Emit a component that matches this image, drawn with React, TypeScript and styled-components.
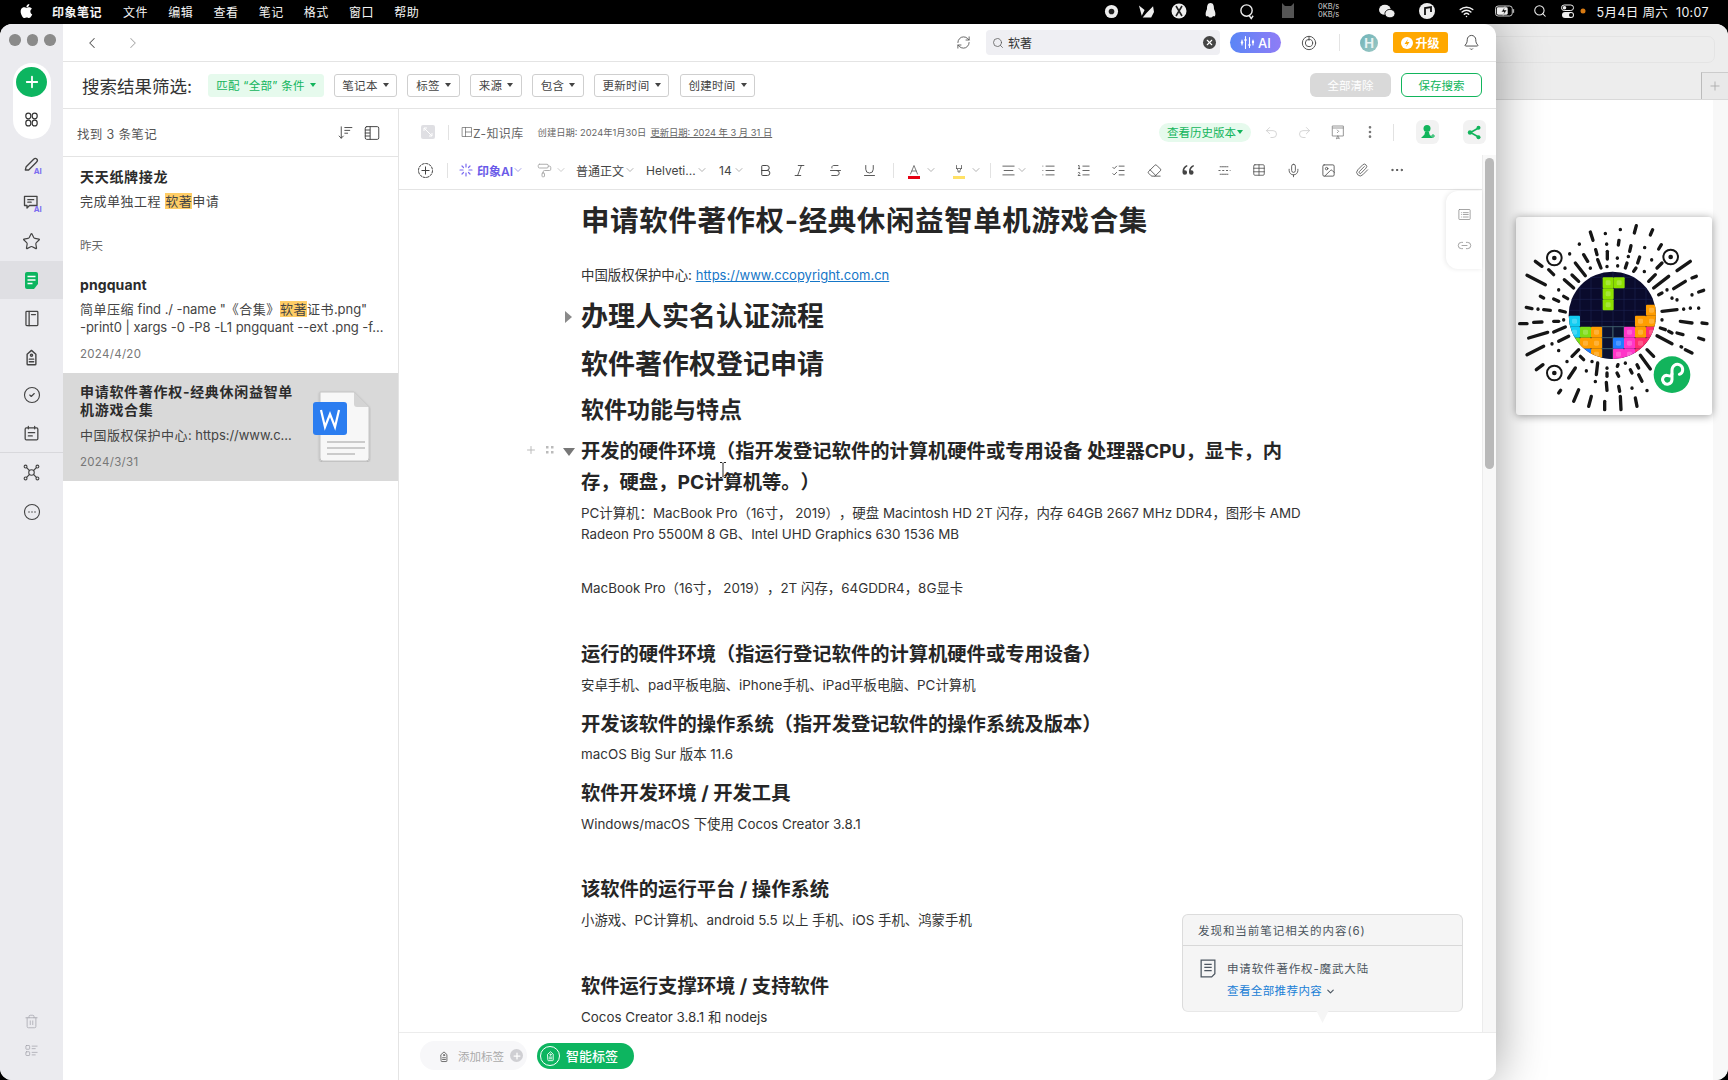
import React from "react";
import styled, { createGlobalStyle } from "styled-components";
import {
  ChevronLeft, ChevronRight, RefreshCw, Search, Bell, Undo2, Redo2, Star, ChevronDown, Plus,
  Bold, Italic, Strikethrough, Underline, List, ListOrdered, ListChecks, Eraser, Table, Mic,
  Image as ImageIcon, Paperclip, MoreHorizontal, PaintRoller, Link2, Trash2, MoreVertical, X,
  Wifi, CircleCheck,
} from "lucide-react";

const FONT = `"Inter", "Liberation Sans", "Noto Sans CJK SC", sans-serif`;

const Global = createGlobalStyle`
  html, body { margin: 0; padding: 0; background: #000; }
  body { font-family: ${FONT}; color: #333; text-spacing-trim: space-all; }
  * { box-sizing: border-box; }
`;

const Page = styled.div`
  width: 1728px; height: 1080px; display: flex; flex-direction: column; overflow: hidden; background: #000;
`;

/* ---------- menu bar ---------- */
const MenuBar = styled.div`
  height: 24px; flex: none; display: flex; align-items: center; color: #f4f4f4; position: relative;
  padding: 0 0 2px 19px; font-size: 12px; letter-spacing: .5px;
`;
const MenuItem = styled.span<{ $ml?: number; $bold?: boolean }>`
  margin-left: ${p => p.$ml ?? 20.2}px; font-weight: ${p => (p.$bold ? 700 : 400)}; white-space: nowrap;
`;
const StatusArea = styled.div`
  margin-left: auto; display: flex; align-items: center; height: 24px; padding-right: 19px;
`;
const StatusSlot = styled.span<{ $ml: number; $w?: number }>`
  margin-left: ${p => p.$ml}px; width: ${p => p.$w ?? 16}px; height: 16px; display: flex; align-items: center; justify-content: center; color: #f2f2f2;
`;
const Speed = styled.span`
  margin-left: 20px; width: 26px; font-size: 7.5px; line-height: 8px; color: #ccc; letter-spacing: 0; text-align: center;
`;
const Clock = styled.span`
  margin-left: 9px; font-size: 12.5px; letter-spacing: .35px; color: #f2f2f2; white-space: nowrap;
`;

/* ---------- desktop & windows ---------- */
const Desktop = styled.div`
  flex: 1; position: relative; overflow: hidden;
`;
const BackWindow = styled.div`
  position: absolute; top: 0; right: 0; bottom: 0; left: 1300px; background: #fff; border-radius: 12px;
  display: flex; flex-direction: column; overflow: hidden;
`;
const BackBar = styled.div`
  height: 76px; flex: none; background: #ededed; border-bottom: 1px solid #d9d9d9; position: relative;
`;
const BackAddress = styled.div`
  position: absolute; left: 0; right: 13px; top: 12px; height: 27px; border: 1px solid #e4e4e4; border-radius: 7px;
`;
const BackTab = styled.div`
  position: absolute; right: 0; bottom: 0; width: 27px; height: 27px; background: #e9e9e9;
  border-left: 1px solid #bbb; border-top: 1px solid #ccc; display: flex; align-items: center; justify-content: center; color: #aaa;
`;
const BackBody = styled.div`
  flex: 1; position: relative; border-right: 15px solid #f8f8f8;
`;
const QrCard = styled.div`
  position: absolute; left: 216px; top: 117px; width: 196px; height: 198px; background: #fff; border-radius: 3px;
  box-shadow: 0 1px 8px rgba(0,0,0,.4);
`;
const FrontWindow = styled.div`
  position: absolute; left: 0; top: 0; width: 1496px; height: 1056px; background: #fff; border-radius: 12px;
  box-shadow: 0 0 50px rgba(0,0,0,.38); display: flex; overflow: hidden;
`;

/* ---------- left rail ---------- */
const Rail = styled.aside`
  width: 63px; flex: none; background: #ebebef; display: flex; flex-direction: column; align-items: center; padding-bottom: 15px;
`;
const Lights = styled.div`
  display: flex; gap: 6px; height: 39px; flex: none; align-items: center; padding-bottom: 7px; width: 100%; padding-left: 9px;
`;
const Light = styled.span`
  width: 11.5px; height: 11.5px; border-radius: 50%; background: #8a8a8a;
`;
const CreatePill = styled.div`
  width: 38px; height: 76px; flex: none; background: #fff; border-radius: 19px; display: flex; flex-direction: column; align-items: center; padding-top: 4px; color: #333;
`;
const CreateBtn = styled.div`
  width: 31px; height: 30px; border-radius: 50%; background: #0db560; color: #fff; display: flex; align-items: center; justify-content: center; margin-bottom: 14px;
`;
const RailItem = styled.div<{ $active?: boolean; $h?: number }>`
  width: 100%; height: ${p => p.$h ?? 38.3}px; flex: none; display: flex; align-items: center; justify-content: center; color: #444;
  background: ${p => (p.$active ? "#dfdfe3" : "transparent")};
`;
const RailTop = styled.div`
  height: 7px; flex: none;
`;
const RailRule = styled.div`
  width: 100%; height: 1px; background: #d8d8dc; flex: none;
`;
const RailSpace = styled.div`
  flex: 1;
`;
const RailFoot = styled.div`
  height: 29px; flex: none; display: flex; align-items: center; justify-content: center; color: #a4a4ac;
`;

/* ---------- main column ---------- */
const Main = styled.div`
  flex: 1; min-width: 0; display: flex; flex-direction: column;
`;
const TopBar = styled.div`
  height: 38px; flex: none; border-bottom: 1px solid #e4e4e4; display: flex; align-items: center; position: relative;
`;
const NavBtn = styled.span<{ $ml: number; $c: string }>`
  margin-left: ${p => p.$ml}px; display: flex; color: ${p => p.$c};
`;
const TopRight = styled.div`
  margin-left: auto; display: flex; align-items: center; padding-right: 16px;
`;
const SearchBox = styled.div`
  width: 234px; height: 25px; margin-left: 15px; background: #efeff3; border-radius: 4px; display: flex; align-items: center; padding: 0 2px 0 6px;
  font-size: 12px; color: #333; gap: 4px;
`;
const ClearDot = styled.span`
  margin-left: auto; width: 13px; height: 13px; border-radius: 50%; background: #444; color: #fff; display: flex; align-items: center; justify-content: center; margin-right: 2px;
`;
const AiBtn = styled.div`
  margin-left: 10px; width: 51px; height: 21px; border-radius: 11px; background: linear-gradient(90deg, #5a86f6, #8f7cf6); color: #fff; display: flex; align-items: center; justify-content: center; gap: 3px; font-size: 13px; font-weight: 500;
`;
const TopDivider = styled.span`
  width: 1px; height: 17px; background: #e4e4e4; margin-left: 22px;
`;
const Avatar = styled.span`
  width: 18px; height: 18px; border-radius: 50%; background: linear-gradient(135deg, #6fb3b8, #9cc8c4); margin-left: 20px; color: #e8f3f3; font-size: 13px; display: flex; align-items: center; justify-content: center; font-weight: 700;
`;
const Upgrade = styled.div`
  margin-left: 15px; width: 55px; height: 21px; background: #ffa800; color: #fff; border-radius: 3px; display: flex; align-items: center; justify-content: center; gap: 2px; font-size: 12px; font-weight: 700;
`;
const IconSlot = styled.span<{ $ml: number; $c?: string }>`
  margin-left: ${p => p.$ml}px; display: flex; color: ${p => p.$c ?? "#555"};
`;

const FilterBar = styled.div`
  height: 47px; flex: none; border-bottom: 1px solid #e4e4e4; display: flex; align-items: center; padding: 0 14px 0 19px;
`;
const FilterLabel = styled.span`
  font-size: 17.5px; color: #333; white-space: nowrap; width: 126px;
`;
const Chip = styled.span<{ $w: number; $green?: boolean; $ml?: number }>`
  width: ${p => p.$w}px; height: 23px; margin-left: ${p => p.$ml ?? 10}px; border-radius: 3px; font-size: 11.5px; letter-spacing: .3px; display: flex; align-items: center; justify-content: center; gap: 5px; white-space: nowrap;
  color: ${p => (p.$green ? "#12b55c" : "#444")};
  background: ${p => (p.$green ? "#e6faed" : "#fff")};
  border: 1px solid ${p => (p.$green ? "#e6faed" : "#cfcfcf")};
`;
const Caret = styled.i`
  width: 0; height: 0; border-left: 3px solid transparent; border-right: 3px solid transparent; border-top: 4px solid currentColor; display: block;
`;
const FilterRight = styled.div`
  margin-left: auto; display: flex; gap: 10px;
`;
const ClearBtn = styled.span`
  width: 81px; height: 24px; background: #d9d9d9; color: #fff; border-radius: 6px; font-size: 11.5px; display: flex; align-items: center; justify-content: center;
`;
const SaveBtn = styled.span`
  width: 81px; height: 24px; border: 1px solid #12b55c; color: #12b55c; border-radius: 6px; font-size: 11.5px; display: flex; align-items: center; justify-content: center;
`;

const Body = styled.div`
  flex: 1; min-height: 0; display: flex;
`;

/* ---------- note list ---------- */
const ListPane = styled.section`
  width: 336px; flex: none; border-right: 1px solid #e4e4e4; display: flex; flex-direction: column;
`;
const ListHead = styled.div`
  height: 48px; flex: none; border-bottom: 1px solid #e4e4e4; display: flex; align-items: center; padding: 2px 17px 0 14px; font-size: 12.5px; color: #555; letter-spacing: .35px;
`;
const ListHeadIcons = styled.div`
  margin-left: auto; display: flex; gap: 9px; color: #444; margin-top: -2px;
`;
const NoteItem = styled.div<{ $h: number; $sel?: boolean }>`
  height: ${p => p.$h}px; flex: none; padding: 0 14px 0 17px; background: ${p => (p.$sel ? "#d9d9d9" : "transparent")};
  display: flex; flex-direction: column; position: relative;
`;
const NoteTitle = styled.div<{ $mt: number; $w?: number; $ls?: number }>`
  margin-top: ${p => p.$mt}px; font-size: 14px; line-height: 18px; font-weight: 700; color: #2b2b2b; letter-spacing: ${p => p.$ls ?? 0.7}px; ${p => (p.$w ? `width: ${p.$w}px;` : "")}
`;
const Snippet = styled.div<{ $mt: number }>`
  margin-top: ${p => p.$mt}px; font-size: 13px; line-height: 17px; color: #444; white-space: nowrap; letter-spacing: -.05px;
`;
const Cjk = styled.span`
  letter-spacing: .5px;
`;
const Mark = styled.mark`
  background: #ffcd66; color: #444; letter-spacing: .5px;
`;
const NoteDate = styled.div<{ $mt: number }>`
  margin-top: ${p => p.$mt}px; font-size: 11.5px; line-height: 16px; color: #777; letter-spacing: .3px;
`;
const DayLabel = styled.div`
  height: 18px; flex: none; margin: -1px 0 1px 17px; font-size: 11.5px; line-height: 18px; color: #666;
`;
const DocThumb = styled.span`
  position: absolute; left: 248px; top: 17px; display: block; width: 60px; height: 72px;
`;

/* ---------- editor ---------- */
const EditorPane = styled.section`
  flex: 1; min-width: 0; display: flex; flex-direction: column; position: relative;
`;
const EditorHead = styled.div`
  height: 46px; flex: none; display: flex; align-items: center; padding-left: 22px; color: #777;
`;
const Expand = styled.span`
  width: 14px; height: 14px; background: #dfdfe3; border-radius: 2px; display: flex; align-items: center; justify-content: center; color: #fff;
`;
const VRule = styled.span<{ $ml: number; $h?: number }>`
  width: 1px; height: ${p => p.$h ?? 15}px; margin-left: ${p => p.$ml}px; background: #e2e2e2; flex: none;
`;
const NotebookName = styled.span`
  margin-left: 12px; font-size: 12px; color: #666; white-space: nowrap; display: flex; align-items: center; letter-spacing: .4px;
`;
const Dates = styled.span`
  margin-left: 14px; font-size: 9.3px; color: #666; white-space: nowrap;
`;
const Updated = styled.span`
  margin-left: 4px; text-decoration: underline;
`;
const HistoryPill = styled.span`
  margin-left: auto; width: 92px; height: 19px; border-radius: 10px; background: #e6faed; color: #12b55c; font-size: 11.5px; display: flex; align-items: center; justify-content: center; gap: 1px; white-space: nowrap;
`;
const HeadTool = styled.span<{ $ml: number; $c?: string }>`
  margin-left: ${p => p.$ml}px; display: flex; color: ${p => p.$c ?? "#999"};
`;
const SoftBox = styled.span<{ $ml: number; $mr?: number }>`
  margin-left: ${p => p.$ml}px; margin-right: ${p => p.$mr ?? 0}px; width: 23px; height: 24px; border-radius: 6px; background: #f2f2f2; color: #12b55c; display: flex; align-items: center; justify-content: center;
`;
const Toolbar = styled.div`
  height: 35px; flex: none; border-bottom: 1px solid #e4e4e4; display: flex; align-items: center; padding: 0 0 4px 16px; color: #444;
`;
const Tool = styled.span<{ $ml?: number; $w?: number; $c?: string }>`
  margin-left: ${p => p.$ml ?? 0}px; ${p => (p.$w ? `width: ${p.$w}px;` : "")} display: flex; align-items: center; justify-content: center; flex: none; color: ${p => p.$c ?? "inherit"}; position: relative;
`;
const ToolText = styled.span<{ $ml: number; $w: number; $c?: string; $bold?: boolean }>`
  margin-left: ${p => p.$ml}px; width: ${p => p.$w}px; font-size: 12px; white-space: nowrap; flex: none; color: ${p => p.$c ?? "#444"}; font-weight: ${p => (p.$bold ? 600 : 400)};
`;
const ColorBar = styled.i<{ $c: string }>`
  position: absolute; left: 0; right: 0; bottom: -2px; height: 3px; background: ${p => p.$c};
`;
const Chev = ({ ml = 0, c = "#999" }: { ml?: number; c?: string }) => (
  <Tool $ml={ml} $w={12} $c={c}><ChevronDown size={12} strokeWidth={1.5} /></Tool>
);

const Scroller = styled.div`
  flex: 1; min-height: 0; overflow: hidden; padding: 11px 0 0 182px; position: relative;
`;
const Title = styled.h1`
  margin: 0; font-size: 28.5px; line-height: 40px; font-weight: 700; color: #262626; white-space: nowrap; letter-spacing: .6px;
`;
const H2 = styled.h2<{ $mt: number }>`
  margin: ${p => p.$mt}px 0 0; font-size: 27px; line-height: 38px; font-weight: 700; color: #262626; white-space: nowrap; position: relative;
`;
const H3 = styled.h3<{ $mt: number }>`
  margin: ${p => p.$mt}px 0 0; font-size: 23px; line-height: 32px; font-weight: 700; color: #262626; white-space: nowrap;
`;
const H4 = styled.h4<{ $mt: number }>`
  margin: ${p => p.$mt}px 0 0; font-size: 19.3px; line-height: 31px; font-weight: 700; color: #262626; white-space: nowrap; position: relative;
`;
const P = styled.p<{ $mt: number }>`
  margin: ${p => p.$mt}px 0 0; font-size: 13.4px; line-height: 21px; color: #333; white-space: nowrap;
`;
const Link = styled.a`
  color: #1576c7; text-decoration: underline; font-size: 13px;
`;
const Fold = styled.i<{ $dir: "right" | "down"; $top: number }>`
  position: absolute; left: -16px; top: ${p => p.$top}px; width: 0; height: 0; display: block;
  ${p => p.$dir === "right"
    ? "border-top: 6px solid transparent; border-bottom: 6px solid transparent; border-left: 7px solid #8a8a8a;"
    : "left: -18px; border-left: 6px solid transparent; border-right: 6px solid transparent; border-top: 8px solid #777;"}
`;
const Gutter = styled.span`
  position: absolute; left: -56px; top: 8px; display: flex; align-items: center; gap: 9px; color: #bbb;
`;
const Cursor = styled.span`
  position: absolute; left: 138px; top: 26px; display: flex; color: #222;
`;
const ScrollTrack = styled.div`
  position: absolute; right: 0; top: 46px; bottom: 48px; width: 14px; background: #f8f8f8; border-left: 1px solid #ececec;
`;
const ScrollThumb = styled.div`
  margin: 3px 0 0 2px; width: 9px; height: 311px; background: #b9b9b9; border-radius: 5px;
`;
const SidePanel = styled.div`
  position: absolute; right: 14px; top: 82px; width: 36px; height: 78px; background: #fff; border-radius: 12px 0 0 12px;
  box-shadow: -1px 0 5px rgba(0,0,0,.09); display: flex; flex-direction: column; align-items: center; justify-content: center; gap: 16px; color: #888;
`;
const RecPanel = styled.div`
  position: absolute; left: 783px; top: 805px; width: 281px; height: 98px; background: #f5f5f5; border: 1px solid #dcdcdc; border-bottom-color: #e8e8e8; border-radius: 6px;
`;
const RecHead = styled.div`
  height: 31px; border-bottom: 1px solid #d8d8d8; padding-left: 15px; font-size: 11.5px; line-height: 32px; color: #4c5660; letter-spacing: .95px;
`;
const RecRow = styled.div`
  display: flex; align-items: center; height: 24px; margin-top: 10px; padding-left: 17px; gap: 11px; font-size: 11.5px; color: #4c5660; letter-spacing: .85px;
`;
const RecLink = styled.div`
  padding-left: 44px; line-height: 22px; font-size: 11.5px; color: #1a80d6; letter-spacing: .4px; display: flex; align-items: center; gap: 3px;
`;
const RecTip = styled.i`
  position: absolute; left: 132px; bottom: -12px; width: 15px; height: 15px; background: #f5f5f5; clip-path: polygon(0 0, 100% 0, 50% 100%); display: block;
`;
const Footer = styled.div`
  height: 48px; flex: none; border-top: 1px solid #ececec; background: #fff; display: flex; align-items: center; padding: 0 0 2px 21px; position: relative;
`;
const AddTag = styled.div`
  width: 107px; height: 29px; border-radius: 15px; background: #f7f7f9; display: flex; align-items: center; padding-left: 17px; font-size: 11.5px; color: #aaa; gap: 7px;
`;
const TagGlyph = styled.span`
  display: flex; color: #666;
`;
const TagPlus = styled.span`
  width: 13px; height: 13px; border-radius: 50%; background: #cfcfd3; color: #fff; display: flex; align-items: center; justify-content: center; margin-left: -1px;
`;
const SmartTag = styled.div`
  margin-left: 10px; width: 97px; height: 26px; border-radius: 13px; background: #0db560; color: #fff; display: flex; align-items: center; padding-left: 3px; gap: 6px; font-size: 13px; font-weight: 500;
`;
const SmartIcon = styled.span`
  width: 20px; height: 20px; border-radius: 50%; border: 1px solid #fff; display: flex; align-items: center; justify-content: center;
`;

/* ---------- drawings ---------- */
const Svg = ({ s = 18, vb = "0 0 24 24", sw = 1.6, children }: { s?: number; vb?: string; sw?: number; children: React.ReactNode }) => (
  <svg width={s} height={s} viewBox={vb} fill="none" stroke="currentColor" strokeWidth={sw} strokeLinecap="round" strokeLinejoin="round">{children}</svg>
);
const AiMark = () => <text x="14" y="23" fontSize="9.5" fontWeight="700" fill="#7b6cf0" stroke="none" fontFamily="Inter, sans-serif">AI</text>;
const TagIcon = ({ s = 18 }: { s?: number }) => (
  <Svg s={s}><path d="M7 9.5 12 5l5 4.5V20.5a1 1 0 0 1-1 1H8a1 1 0 0 1-1-1z" /><circle cx="12" cy="10.5" r="1.2" /><path d="M9.5 15h5M9.5 18h5" /></Svg>
);
const Sparkle = ({ s = 14, c = "#7b6cf0" }: { s?: number; c?: string }) => (
  <svg width={s} height={s} viewBox="0 0 14 14" stroke={c} strokeWidth="1.2" strokeLinecap="round" fill="none">
    <path d="M7 1v3M7 10v3M1 7h3M10 7h3M3 3l1.5 1.5M9.5 9.5 11 11M11 3 9.5 4.5M4.5 9.5 3 11" />
  </svg>
);
const AiBars = () => (
  <svg width="15" height="15" viewBox="0 0 15 15" stroke="#fff" strokeWidth="1.1" strokeLinecap="round" fill="#fff">
    <path d="M2 5v5M5.500 1.500v12M9.500 2.500v10M13 5v5" />
    <circle cx="2" cy="7.500" r="1.200" stroke="none" /><circle cx="5.500" cy="5" r="1.200" stroke="none" /><circle cx="9.500" cy="10" r="1.200" stroke="none" /><circle cx="13" cy="7" r="1.200" stroke="none" />
  </svg>
);
const ShareDots = () => (
  <svg width="15" height="15" viewBox="0 0 15 15" stroke="#12b55c" strokeWidth="1.6" fill="#12b55c">
    <path d="M11.500 3 3.500 7.500l8 4.500" fill="none" />
    <circle cx="11.500" cy="2.800" r="2" stroke="none" /><circle cx="3" cy="7.500" r="2.200" stroke="none" /><circle cx="11.500" cy="12.200" r="2" stroke="none" />
  </svg>
);
const Apple = () => (
  <svg width="14" height="16" viewBox="0 0 14 17" fill="#fff"><path d="M11.6 9c0-1.9 1.6-2.8 1.7-2.9-.9-1.3-2.3-1.5-2.8-1.5-1.2-.1-2.3.7-2.9.7s-1.5-.7-2.5-.7C3.8 4.6 2.6 5.3 1.9 6.5c-1.3 2.3-.3 5.7 1 7.5.6.9 1.4 1.9 2.4 1.9s1.3-.6 2.5-.6 1.5.6 2.5.6 1.7-.9 2.3-1.8c.7-1 1-2 1-2.1-.1 0-2-.8-2-3zM9.7 3.4c.5-.6.9-1.5.8-2.4-.8 0-1.7.5-2.3 1.2-.5.6-.9 1.5-.8 2.3.9.1 1.8-.4 2.3-1.1z" /></svg>
);

const dashes: number[][] = [
  [300,97,308,122],[345,101,345,102],[390,89,390,90],[438,78,432,100],[487,90,480,106],[513,135,505,148],[267,133,267,134],[349,133,349,134],[386,122,384,136],[422,138,418,155],[463,143,463,144],[238,162,238,163],[316,150,320,165],[351,155,351,178],[381,175,381,176],[414,170,414,171],[448,172,442,190],[484,180,484,181],[500,205,515,190],[600,185,560,213],
  [135,185,155,200],[175,210,190,225],[224,205,224,206],[255,190,285,228],[280,165,292,185],[300,205,300,206],[322,180,332,205],[350,200,350,201],[382,198,382,199],[410,190,405,205],[437,205,430,215],[462,215,462,216],[475,245,495,225],[490,265,535,230],[550,267,585,245],[618,230,605,235],
  [110,227,165,255],[222,240,250,265],[245,226,265,245],[530,270,530,271],[505,285,515,280],[205,270,205,271],[190,298,205,305],[150,290,160,295],[625,277,640,272],[605,285,605,286],[560,300,560,301],[545,295,545,296],[220,290,232,297],[108,323,125,327],[143,328,143,329],[160,330,180,332],[208,333,225,337],[515,335,560,330],[580,328,580,329],[600,325,600,326],[625,325,625,326],
  [220,360,220,361],[88,372,110,372],[130,368,155,367],[190,365,205,365],[515,360,515,361],[570,365,605,370],[635,370,650,372],[190,397,225,382],[115,415,172,398],[205,425,235,410],[510,385,525,390],[535,395,545,400],[560,400,578,405],[625,415,640,420],[110,465,160,440],[185,432,185,433],[500,408,545,432],[572,441,574,442],[585,450,605,460],[205,452,205,453],[245,470,265,450],[138,510,158,495],[230,485,230,486],[270,470,280,480],[470,450,490,470],[450,467,480,508],[235,535,255,505],[305,485,305,486],[322,490,318,525],[288,513,288,514],[350,505,350,506],[383,495,381,500],[405,490,405,491],[440,495,445,505],[350,520,350,530],[380,520,385,530],[420,510,425,520],[445,525,455,545],[315,545,315,546],[348,548,350,572],[385,560,388,575],[425,565,425,566],[470,572,470,573],[211,572,205,580],[265,570,250,605],[303,590,295,620],[343,605,343,630],[390,590,392,630],[435,595,440,620],
];
const blocks: [number, number, string][] = [
  [337,233,"#8de000"],[370,233,"#8de000"],[337,266,"#8de000"],[337,299,"#8de000"],
  [467,315,"#ff9d00"],[434,348,"#ff9d00"],[467,348,"#ff9d00"],[434,381,"#ff9d00"],[467,381,"#ff2d6f"],
  [236,348,"#12cdf2"],[236,381,"#12cdf2"],[269,381,"#7ddc14"],[302,381,"#ff9d00"],
  [401,381,"#ff35c8"],[269,414,"#ff9d00"],[302,414,"#ff9d00"],[368,414,"#1f7dff"],[401,414,"#ff35c8"],[434,414,"#ff2d6f"],[467,414,"#ff2d6f"],
  [269,447,"#1f7dff"],[302,447,"#ff9d00"],[368,447,"#ff35c8"],[401,447,"#ff35c8"],[434,447,"#ff2d6f"],[236,414,"#7ddc14"],
];
const darks: [number, number][] = [[335,381],[368,381],[335,414],[335,447]];
const QrCode = () => (
  <svg width="196" height="198" viewBox="77 52 588 594">
    <defs><clipPath id="qrc"><circle cx="366" cy="347" r="131" /></clipPath></defs>
    <g stroke="#161616" strokeLinecap="round" strokeWidth="10" fill="none">
      {dashes.map((d, i) => <line key={i} x1={d[0]} y1={d[1]} x2={d[2]} y2={d[3]} />)}
    </g>
    {[[192,175],[541,172],[192,520]].map(([x, y]) => (
      <g key={x + "-" + y} fill="none" stroke="#161616">
        <circle cx={x} cy={y} r="22" strokeWidth="6" />
        <circle cx={x} cy={y} r="7" fill="#161616" strokeWidth="0" />
      </g>
    ))}
    <g clipPath="url(#qrc)">
      <rect x="230" y="210" width="275" height="275" fill="#0a0b2c" />
      {[269,302,335,368,401,434,467].map(x => <line key={x} x1={x} y1="210" x2={x} y2="480" stroke="#1c2350" strokeWidth="2" />)}
      {[233,266,299,332,365].map(y => <line key={y} x1="230" y1={y} x2="505" y2={y} stroke="#1c2350" strokeWidth="2" />)}
      {darks.map(([x, y]) => <rect key={x + "d" + y} x={x} y={y} width="33" height="33" fill="#0c1230" stroke="#3c5a68" strokeWidth="3" />)}
      {blocks.map(([x, y, c]) => (
        <g key={x + "b" + y}>
          <rect x={x} y={y} width="33" height="33" rx="3" fill={c} />
          <rect x={x + 9} y={y + 9} width="15" height="15" rx="4" fill="#fff" opacity=".22" />
        </g>
      ))}
    </g>
    <circle cx="545" cy="525" r="55" fill="#12b45c" />
    <path d="M520 548c-8-10 0-24 13-20 10 3 12-1 12-8v-8c0-14 12-22 24-16 12 7 10 24-2 28" fill="none" stroke="#fff" strokeWidth="9" strokeLinecap="round" />
    <path d="M520 548c6 9 24 7 25-8v-18" fill="none" stroke="#fff" strokeWidth="9" strokeLinecap="round" />
  </svg>
);

const WordDoc = () => (
  <svg width="60" height="72" viewBox="0 0 60 72">
    <defs><filter id="ds" x="-20%" y="-20%" width="140%" height="140%"><feDropShadow dx="0" dy="1" stdDeviation="1" floodOpacity=".25" /></filter></defs>
    <path d="M9 2h34l15 15v51a3 3 0 0 1-3 3H12a3 3 0 0 1-3-3z" fill="#f7f7f7" stroke="#c4c4c4" filter="url(#ds)" />
    <path d="M43 2v12a3 3 0 0 0 3 3h12z" fill="#d4d4d4" />
    <rect x="2" y="12" width="34" height="33" rx="3" fill="#2b7df0" />
    <path d="M10 20l4 17 5-13 5 13 4-17" fill="none" stroke="#fff" strokeWidth="2.2" />
    <path d="M16 52h38M16 58h38M16 64h28" stroke="#bdbdbd" strokeWidth="1.6" />
  </svg>
);

export default function App() {
  return (
    <Page>
      <Global />
      <MenuBar>
        <Apple />
        <MenuItem $ml={19} $bold>印象笔记</MenuItem>
        <MenuItem $ml={21}>文件</MenuItem>
        <MenuItem>编辑</MenuItem>
        <MenuItem>查看</MenuItem>
        <MenuItem>笔记</MenuItem>
        <MenuItem>格式</MenuItem>
        <MenuItem>窗口</MenuItem>
        <MenuItem>帮助</MenuItem>
        <StatusArea>
          <StatusSlot $ml={0}><svg width="15" height="15" viewBox="0 0 16 16"><circle cx="8" cy="8" r="7" fill="#eee" /><circle cx="8" cy="8" r="3" fill="#222" /></svg></StatusSlot>
          <StatusSlot $ml={18}><svg width="17" height="15" viewBox="0 0 17 15" fill="#eee"><path d="M1 1l6 5-3 6zM16 2l-7 7-4 5h9l3-6z" /></svg></StatusSlot>
          <StatusSlot $ml={17}><svg width="16" height="16" viewBox="0 0 16 16"><circle cx="8" cy="8" r="7.5" fill="#eee" /><path d="M5 3l6 10M11 3 5 13" stroke="#222" strokeWidth="1.6" /></svg></StatusSlot>
          <StatusSlot $ml={16}><svg width="13" height="16" viewBox="0 0 13 16" fill="#eee"><path d="M6.5 0C3.5 0 3 3 3 6c-1 2-2 5-1 7 1 1 2 0 2 0 1 2 4 2 5 0 0 0 1 1 2 0 1-2 0-5-1-7 0-3-.5-6-3.5-6z" /></svg></StatusSlot>
          <StatusSlot $ml={20}><svg width="17" height="17" viewBox="0 0 17 17" fill="none" stroke="#eee" strokeWidth="1.5"><circle cx="8" cy="7.5" r="6" /><path d="M11 13l2 3 2-3" /></svg></StatusSlot>
          <StatusSlot $ml={25}><svg width="14" height="16" viewBox="0 0 14 16" fill="#555"><path d="M1 0l3 3h6l3-3v15H1z" /></svg></StatusSlot>
          <Speed>0KB/s<br />0KB/s</Speed>
          <StatusSlot $ml={37}><svg width="19" height="17" viewBox="0 0 19 17" fill="#eee"><ellipse cx="7" cy="6.5" rx="7" ry="6" /><ellipse cx="13" cy="11" rx="6" ry="5" stroke="#000" /></svg></StatusSlot>
          <StatusSlot $ml={24}><svg width="16" height="16" viewBox="0 0 16 16"><circle cx="8" cy="8" r="8" fill="#eee" /><path d="M6 12V5l6-1v5" stroke="#111" strokeWidth="1.8" fill="none" /></svg></StatusSlot>
          <StatusSlot $ml={24}><Wifi size={15} strokeWidth={2.4} /></StatusSlot>
          <StatusSlot $ml={20} $w={20}><svg width="22" height="12" viewBox="0 0 22 12" fill="none"><rect x=".5" y=".5" width="18.5" height="11" rx="3" stroke="#ddd" /><rect x="2" y="2" width="12" height="8" rx="1.5" fill="#eee" /><path d="M20.5 4v4" stroke="#ddd" /><path d="M11 1 7 7h3l-1 4 4-6h-3z" fill="#000" stroke="#eee" strokeWidth=".6" /></svg></StatusSlot>
          <StatusSlot $ml={17}><Search size={14} strokeWidth={1.8} /></StatusSlot>
          <StatusSlot $ml={12}><svg width="14" height="15" viewBox="0 0 14 15" fill="none"><rect x=".5" y="1" width="12" height="5.5" rx="2.7" stroke="#eee" /><rect x="1" y="8" width="12" height="6" rx="3" fill="#eee" /><circle cx="10" cy="11" r="2" fill="#000" /><circle cx="3.5" cy="3.7" r="1.8" fill="#eee" /></svg></StatusSlot>
          <StatusSlot $ml={2} $w={10}><svg width="6" height="6"><circle cx="3" cy="3" r="2.5" fill="#d87a12" /></svg></StatusSlot>
          <Clock>5月4日 周六&nbsp; 10:07</Clock>
        </StatusArea>
      </MenuBar>
      <Desktop>
        <BackWindow>
          <BackBar>
            <BackAddress />
            <BackTab><Plus size={14} strokeWidth={1.5} /></BackTab>
          </BackBar>
          <BackBody>
            <QrCard><QrCode /></QrCard>
          </BackBody>
        </BackWindow>
        <FrontWindow>
          <Rail>
            <Lights><Light /><Light /><Light /></Lights>
            <CreatePill>
              <CreateBtn><Plus size={18} strokeWidth={2.4} /></CreateBtn>
              <Svg s={17} sw={1.7}><rect x="4" y="3" width="7" height="8" rx="3.5" /><rect x="13" y="3" width="7" height="8" rx="3.5" /><rect x="4" y="13" width="7" height="8" rx="3.5" /><rect x="13" y="13" width="7" height="8" rx="3.5" /></Svg>
            </CreatePill>
            <RailTop />
            <RailItem><Svg s={20}><path d="M4 18l1-4L14 5c1-1 3-1 4 0s0 3-1 4l-9 9z" /><AiMark /></Svg></RailItem>
            <RailItem><Svg s={20}><path d="M3 4h15v11H9l-3 3v-3H3z" /><path d="M7 8h7M7 11h4" /><AiMark /></Svg></RailItem>
            <RailItem><Star size={19} strokeWidth={1.5} /></RailItem>
            <RailItem $active><svg width="13" height="17" viewBox="0 0 13 17"><path d="M2 0h9a2 2 0 0 1 2 2v10l-4 5H2a2 2 0 0 1-2-2V2a2 2 0 0 1 2-2z" fill="#0db560" /><path d="M2.500 4.500h8M2.500 8h8M2.500 11.500h5" stroke="#fff" strokeWidth="1.300" /></svg></RailItem>
            <RailItem><Svg s={19}><rect x="5" y="3" width="15" height="18" rx="1" /><path d="M9 3v18M12 7h5" /></Svg></RailItem>
            <RailItem><TagIcon s={21} /></RailItem>
            <RailItem><CircleCheck size={18} strokeWidth={1.5} /></RailItem>
            <RailItem><Svg s={19}><rect x="4" y="5" width="16" height="15" rx="1.5" /><path d="M8 3v3M16 3v3M8 11h8M8 15h5" /></Svg></RailItem>
            <RailRule />
            <RailItem $h={39}><Svg s={19} sw={1.4}><circle cx="12" cy="12" r="3.5" /><circle cx="4.5" cy="4.5" r="1.8" /><circle cx="19.5" cy="4.5" r="1.8" /><circle cx="4.5" cy="19.5" r="1.8" /><circle cx="19.5" cy="19.5" r="1.8" /><path d="M6 6l3.5 3.5M18 6l-3.5 3.5M6 18l3.5-3.5M18 18l-3.5-3.5" /></Svg></RailItem>
            <RailItem $h={39}><Svg s={18} sw={1.5}><circle cx="12" cy="12" r="10" /><path d="M8 12h.01M12 12h.01M16 12h.01" strokeWidth="2" /></Svg></RailItem>
            <RailSpace />
            <RailFoot><Trash2 size={15} strokeWidth={1.2} /></RailFoot>
            <RailFoot><Svg s={15} sw={1.2}><rect x="3" y="4" width="6" height="6" rx="1" /><rect x="3" y="14" width="6" height="6" rx="1" /><path d="M13 5h8M13 9h5M13 15h8M13 19h5" /></Svg></RailFoot>
          </Rail>
          <Main>
            <TopBar>
              <NavBtn $ml={20} $c="#555"><ChevronLeft size={18} strokeWidth={1.4} /></NavBtn>
              <NavBtn $ml={23} $c="#aaa"><ChevronRight size={18} strokeWidth={1.4} /></NavBtn>
              <TopRight>
                <IconSlot $ml={0}><RefreshCw size={15} strokeWidth={1.4} /></IconSlot>
                <SearchBox>
                  <Search size={12} strokeWidth={1.5} color="#555" />软著
                  <ClearDot><X size={9} strokeWidth={3} /></ClearDot>
                </SearchBox>
                <AiBtn><AiBars />AI</AiBtn>
                <IconSlot $ml={20}><Svg s={16} sw={1.5}><circle cx="12" cy="12" r="10" /><circle cx="12" cy="12" r="5.5" /><path d="M12 2v6" /></Svg></IconSlot>
                <TopDivider />
                <Avatar>H</Avatar>
                <Upgrade><svg width="12" height="12" viewBox="0 0 12 12"><circle cx="6" cy="6" r="6" fill="#fff" /><path d="M7 2 3.5 7H6l-1 3 3.5-5H6z" fill="#ffa800" /></svg>升级</Upgrade>
                <IconSlot $ml={15} $c="#444"><Bell size={17} strokeWidth={1.3} /></IconSlot>
              </TopRight>
            </TopBar>
            <FilterBar>
              <FilterLabel>搜索结果筛选:</FilterLabel>
              <Chip $w={116} $green $ml={0}>匹配 “全部” 条件<Caret /></Chip>
              <Chip $w={63}>笔记本<Caret /></Chip>
              <Chip $w={53}>标签<Caret /></Chip>
              <Chip $w={52}>来源<Caret /></Chip>
              <Chip $w={52}>包含<Caret /></Chip>
              <Chip $w={75}>更新时间<Caret /></Chip>
              <Chip $w={75} $ml={11}>创建时间<Caret /></Chip>
              <FilterRight>
                <ClearBtn>全部清除</ClearBtn>
                <SaveBtn>保存搜索</SaveBtn>
              </FilterRight>
            </FilterBar>
            <Body>
              <ListPane>
                <ListHead>
                  找到 3 条笔记
                  <ListHeadIcons>
                    <Svg s={17} sw={1.3}><path d="M6 4v16M3 17l3 3 3-3M11 5h10M11 9h7M11 13h4" /></Svg>
                    <Svg s={18} sw={1.3}><rect x="3" y="3.5" width="18" height="17" rx="2" /><path d="M9.5 3.5v17M3 8h6M3 12h6M3 16h6" /></Svg>
                  </ListHeadIcons>
                </ListHead>
                <NoteItem $h={81}>
                  <NoteTitle $mt={11}>天天纸牌接龙</NoteTitle>
                  <Snippet $mt={7}><Cjk>完成单独工程 </Cjk><Mark>软著</Mark><Cjk>申请</Cjk></Snippet>
                </NoteItem>
                <DayLabel>昨天</DayLabel>
                <NoteItem $h={117}>
                  <NoteTitle $mt={20} $ls={0.1}>pngquant</NoteTitle>
                  <Snippet $mt={7}><Cjk>简单压缩</Cjk> find ./ -name "<Cjk>《合集》</Cjk><Mark>软著</Mark><Cjk>证书</Cjk>.png"</Snippet>
                  <Snippet $mt={1}>-print0 | xargs -0 -P8 -L1 pngquant --ext .png -f...</Snippet>
                  <NoteDate $mt={10}>2024/4/20</NoteDate>
                </NoteItem>
                <NoteItem $h={108} $sel>
                  <NoteTitle $mt={10} $w={224}>申请软件著作权-经典休闲益智单机游戏合集</NoteTitle>
                  <Snippet $mt={8}><Cjk>中国版权保护中心</Cjk>: https://www.c...</Snippet>
                  <NoteDate $mt={10}>2024/3/31</NoteDate>
                  <DocThumb><WordDoc /></DocThumb>
                </NoteItem>
              </ListPane>
              <EditorPane>
                <EditorHead>
                  <Expand><svg width="10" height="10" viewBox="0 0 10 10" stroke="#fff" strokeWidth="1" fill="none"><path d="M1 1l8 8M1 1h3M1 1v3M9 9H6M9 9V6" /></svg></Expand>
                  <VRule $ml={13} />
                  <NotebookName><Svg s={12} sw={1.4}><rect x="3" y="3" width="18" height="18" /><path d="M9 3v18M9 12h12" /></Svg>Z-知识库</NotebookName>
                  <Dates>创建日期: 2024年1月30日<Updated>更新日期: 2024 年 3 月 31 日</Updated></Dates>
                  <HistoryPill>查看历史版本<Caret /></HistoryPill>
                  <HeadTool $ml={13} $c="#ccc"><Undo2 size={15} strokeWidth={1.3} /></HeadTool>
                  <HeadTool $ml={18} $c="#ccc"><Redo2 size={15} strokeWidth={1.3} /></HeadTool>
                  <HeadTool $ml={18} $c="#888"><Svg s={16} sw={1.3}><path d="M4 3h16v15H4zM4 6h16M11 9l2 2-2 2M12 18l2 4-2-1-2 1z" /></Svg></HeadTool>
                  <HeadTool $ml={16} $c="#777"><MoreVertical size={16} strokeWidth={2} /></HeadTool>
                  <VRule $ml={15} $h={17} />
                  <SoftBox $ml={22}><svg width="14" height="16" viewBox="0 0 14 16" fill="#12b55c"><circle cx="6" cy="4.5" r="3.5" /><path d="M4 8h4l.5 2.5L12 14H0l3.5-3.5z" /><path d="M10 12h4M12 10v4" stroke="#12b55c" /></svg></SoftBox>
                  <SoftBox $ml={24} $mr={10}><ShareDots /></SoftBox>
                </EditorHead>
                <Toolbar>
                  <Tool $w={20}><svg width="17" height="17" viewBox="0 0 17 17" fill="none" stroke="#444"><circle cx="8.5" cy="8.5" r="7" strokeDasharray="3 .6" /><path d="M8.5 4.5v8M4.5 8.5h8" /></svg></Tool>
                  <VRule $ml={12} />
                  <Tool $ml={11} $w={14}><Sparkle /></Tool>
                  <ToolText $ml={4} $w={35} $c="#6a5ae8" $bold>印象AI</ToolText>
                  <Chev c="#8a82e0" />
                  <Tool $ml={12} $w={16} $c="#aaa"><PaintRoller size={15} strokeWidth={1.5} /></Tool>
                  <Chev ml={3} c="#bbb" />
                  <ToolText $ml={9} $w={48}>普通正文</ToolText>
                  <Chev />
                  <ToolText $ml={10} $w={50}>Helveti...</ToolText>
                  <Chev />
                  <ToolText $ml={11} $w={14}>14</ToolText>
                  <Chev />
                  <Tool $ml={12} $w={16}><Bold size={15} strokeWidth={1.6} /></Tool>
                  <Tool $ml={18} $w={16}><Italic size={15} strokeWidth={1.4} /></Tool>
                  <Tool $ml={20} $w={16}><Strikethrough size={15} strokeWidth={1.4} /></Tool>
                  <Tool $ml={18} $w={16}><Underline size={15} strokeWidth={1.4} /></Tool>
                  <VRule $ml={16} />
                  <Tool $ml={14} $w={12}><Svg s={14} sw={1.4}><path d="M5 20 12 3l7 17M8 14h8" /></Svg><ColorBar $c="#e60012" /></Tool>
                  <Chev ml={5} />
                  <Tool $ml={16} $w={12}><Svg s={14} sw={1.4}><path d="M7 3v6l3 3v4h4v-4l3-3V3" /><path d="M7 9h10" /></Svg><ColorBar $c="#ffe166" /></Tool>
                  <Chev ml={5} />
                  <VRule $ml={8} />
                  <Tool $ml={9} $w={16}><Svg s={15} sw={1.3}><path d="M3 5h18M5 12h14M3 19h18" /></Svg></Tool>
                  <Chev />
                  <Tool $ml={12} $w={16}><List size={15} strokeWidth={1.3} /></Tool>
                  <Tool $ml={19} $w={16}><ListOrdered size={15} strokeWidth={1.3} /></Tool>
                  <Tool $ml={19} $w={16}><ListChecks size={15} strokeWidth={1.3} /></Tool>
                  <Tool $ml={20} $w={16}><Eraser size={15} strokeWidth={1.3} /></Tool>
                  <Tool $ml={18} $w={16}><svg width="14" height="14" viewBox="0 0 14 14" fill="#444"><path d="M6 2C3 3 1.5 5.5 1.5 8.5v1a2.3 2.3 0 1 0 2.3-2.3h-.6C3.500 5.500 4.800 4.200 6.500 3.300zM12.500 2c-3 1-4.500 3.500-4.500 6.500v1a2.300 2.300 0 1 0 2.300-2.300h-.6c.3-1.700 1.600-3 3.300-3.900z" /></svg></Tool>
                  <Tool $ml={20} $w={16}><Svg s={15} sw={1.3}><path d="M5 6h14M3 12h3M9 12h3M15 12h3M21 12h.01M5 18h14" strokeDasharray="2 1.5" /></Svg></Tool>
                  <Tool $ml={19} $w={16}><Table size={14} strokeWidth={1.3} /></Tool>
                  <Tool $ml={18} $w={16}><Mic size={15} strokeWidth={1.3} /></Tool>
                  <Tool $ml={19} $w={16}><ImageIcon size={15} strokeWidth={1.3} /></Tool>
                  <Tool $ml={18} $w={16}><Paperclip size={14} strokeWidth={1.3} /></Tool>
                  <Tool $ml={19} $w={16}><MoreHorizontal size={16} strokeWidth={1.5} /></Tool>
                </Toolbar>
                <Scroller>
                  <Title>申请软件著作权-经典休闲益智单机游戏合集</Title>
                  <P $mt={24}>中国版权保护中心: <Link>https://www.ccopyright.com.cn</Link></P>
                  <H2 $mt={12}><Fold $dir="right" $top={13} />办理人实名认证流程</H2>
                  <H2 $mt={10}>软件著作权登记申请</H2>
                  <H3 $mt={10}>软件功能与特点</H3>
                  <H4 $mt={10}>
                    <Gutter><Plus size={12} strokeWidth={2} /><svg width="8" height="8" viewBox="0 0 8 8" fill="#bbb"><rect width="2.5" height="2.5" /><rect x="5" width="2.5" height="2.5" /><rect y="5" width="2.5" height="2.5" /><rect x="5" y="5" width="2.5" height="2.5" /></svg></Gutter>
                    <Fold $dir="down" $top={12} />
                    开发的硬件环境（指开发登记软件的计算机硬件或专用设备 处理器CPU，显卡，内<br />存，硬盘，PC计算机等。）
                    <Cursor><svg width="8" height="16" viewBox="0 0 8 16" stroke="#222" fill="none"><path d="M1 .5h2l1 1 1-1h2M4 1.5v13M1 15.5h2l1-1 1 1h2" /></svg></Cursor>
                  </H4>
                  <P $mt={5}>PC计算机：MacBook Pro（16寸， 2019），硬盘 Macintosh HD 2T 闪存，内存 64GB 2667 MHz DDR4，图形卡 AMD<br />Radeon Pro 5500M 8 GB、Intel UHD Graphics 630 1536 MB</P>
                  <P $mt={33}>MacBook Pro（16寸， 2019），2T 闪存，64GDDR4，8G显卡</P>
                  <H4 $mt={40}>运行的硬件环境（指运行登记软件的计算机硬件或专用设备）</H4>
                  <P $mt={5}>安卓手机、pad平板电脑、iPhone手机、iPad平板电脑、PC计算机</P>
                  <H4 $mt={13}>开发该软件的操作系统（指开发登记软件的操作系统及版本）</H4>
                  <P $mt={4}>macOS Big Sur 版本 11.6</P>
                  <H4 $mt={13}>软件开发环境 / 开发工具</H4>
                  <P $mt={5}>Windows/macOS 下使用 Cocos Creator 3.8.1</P>
                  <H4 $mt={39}>该软件的运行平台 / 操作系统</H4>
                  <P $mt={5}>小游戏、PC计算机、android 5.5 以上 手机、iOS 手机、鸿蒙手机</P>
                  <H4 $mt={40}>软件运行支撑环境 / 支持软件</H4>
                  <P $mt={5}>Cocos Creator 3.8.1 和 nodejs</P>
                </Scroller>
                <ScrollTrack><ScrollThumb /></ScrollTrack>
                <SidePanel>
                  <Svg s={15} sw={1.2}><rect x="3" y="4" width="18" height="16" rx="1" /><path d="M7 9h.01M7 12h.01M7 16h.01M10 9h8M10 12h8M10 16h8" /></Svg>
                  <Link2 size={15} strokeWidth={1.2} />
                </SidePanel>
                <RecPanel>
                  <RecHead>发现和当前笔记相关的内容(6)</RecHead>
                  <RecRow>
                    <svg width="16" height="19" viewBox="0 0 15 18" fill="none" stroke="#4c5660" strokeWidth="1.2"><path d="M1 1h13v13l-3 3H1zM4 5h7M4 8h7M4 11h7" /></svg>
                    申请软件著作权-魔武大陆
                  </RecRow>
                  <RecLink>查看全部推荐内容<ChevronDown size={11} strokeWidth={2.5} color="#4c5660" /></RecLink>
                  <RecTip />
                </RecPanel>
                <Footer>
                  <AddTag><TagGlyph><TagIcon s={14} /></TagGlyph>添加标签<TagPlus><Plus size={10} strokeWidth={3} /></TagPlus></AddTag>
                  <SmartTag><SmartIcon><TagIcon s={13} /></SmartIcon>智能标签</SmartTag>
                </Footer>
              </EditorPane>
            </Body>
          </Main>
        </FrontWindow>
      </Desktop>
    </Page>
  );
}
